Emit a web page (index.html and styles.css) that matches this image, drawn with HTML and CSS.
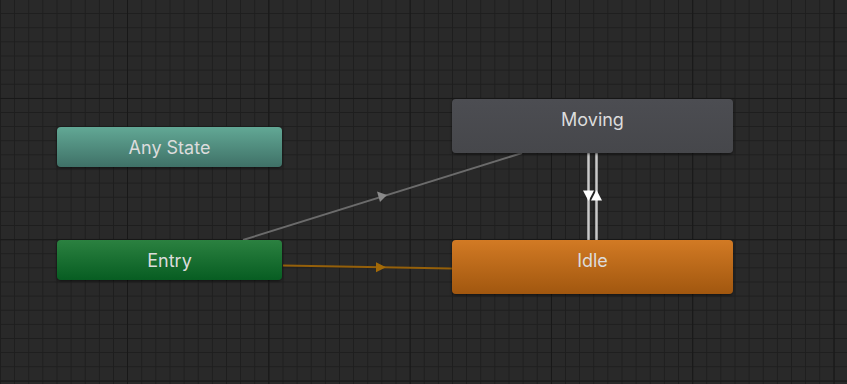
FILE: index.html
```html
<!DOCTYPE html>
<html lang="en">
<head>
    <meta charset="UTF-8">
    <meta name="viewport" content="width=device-width, initial-scale=1.0">
    <title>Animator</title>
    <link rel="stylesheet" href="styles.css">
</head>
<body>
    <div class="graph">
        <!-- Transitions -->
        <svg class="edges" width="847" height="384" viewBox="0 0 847 384">
            <line x1="243" y1="240" x2="522" y2="153" class="edge-gray"/>
            <polygon points="387,195 377,191.5 380,202" class="arrow-gray"/>
            <line x1="283" y1="265.5" x2="452" y2="268.5" class="edge-orange"/>
            <polygon points="386,267.2 376,262.2 376,272.2" class="arrow-orange"/>
            <line x1="588.5" y1="153" x2="588.5" y2="240" class="edge-white"/>
            <line x1="596.5" y1="153" x2="596.5" y2="240" class="edge-white"/>
            <polygon points="583,190.5 594,190.5 588.5,201" class="arrow-white"/>
            <polygon points="596.5,190 602,200.5 591,200.5" class="arrow-white"/>
        </svg>

        <!-- States -->
        <div class="node node-any">Any State</div>
        <div class="node node-entry">Entry</div>
        <div class="node node-big node-moving">Moving</div>
        <div class="node node-big node-idle">Idle</div>
    </div>
</body>
</html>
```

FILE: styles.css
```css
body {
    margin: 0;
    background-color: #292929;
    font-family: Inter, "Noto Sans", sans-serif;
    overflow: hidden;
}
.graph {
    position: relative;
    width: 847px;
    height: 384px;
    background-color: #292929;
    background-image:
        linear-gradient(to right, #181818 1px, transparent 1px),
        linear-gradient(to bottom, #181818 1px, transparent 1px),
        linear-gradient(to right, #1e1e1e 1px, transparent 1px),
        linear-gradient(to bottom, #1e1e1e 1px, transparent 1px);
    background-size: 141.33px 141.33px, 141.33px 141.33px, 14.133px 14.133px, 14.133px 14.133px;
    background-position: 127px 0, 0 98px, 0 0, 0 -1px;
}
.edges {
    position: absolute;
    left: 0;
    top: 0;
}
.edge-gray {
    stroke: #6b6b6b;
    stroke-width: 2;
}
.arrow-gray {
    fill: #8a8a8a;
}
.edge-orange {
    stroke: #95600a;
    stroke-width: 2;
}
.arrow-orange {
    fill: #a36a08;
}
.edge-white {
    stroke: #c9c9c9;
    stroke-width: 2.5;
}
.arrow-white {
    fill: #ffffff;
}
/* State nodes */
.node {
    position: absolute;
    display: flex;
    justify-content: center;
    align-items: center;
    box-sizing: border-box;
    width: 225px;
    height: 40px;
    left: 57px;
    border-radius: 4px;
    color: #dcdcdc;
    font-size: 18px;
    font-weight: 400;
    box-shadow: 0 1px 3px rgba(0, 0, 0, 0.6);
}
.node-big {
    align-items: flex-start;
    padding-top: 10px;
    width: 281px;
    height: 54px;
    left: 452px;
}
.node-any {
    top: 127px;
    background: linear-gradient(to bottom, #62a895, #3f7167);
}
.node-entry {
    top: 240px;
    background: linear-gradient(to bottom, #2b8140, #075d22);
}
.node-moving {
    top: 99px;
    background: linear-gradient(to bottom, #4c4d52, #46474b);
}
.node-idle {
    top: 240px;
    background: linear-gradient(to bottom, #d27a24, #a1570f);
}
```
